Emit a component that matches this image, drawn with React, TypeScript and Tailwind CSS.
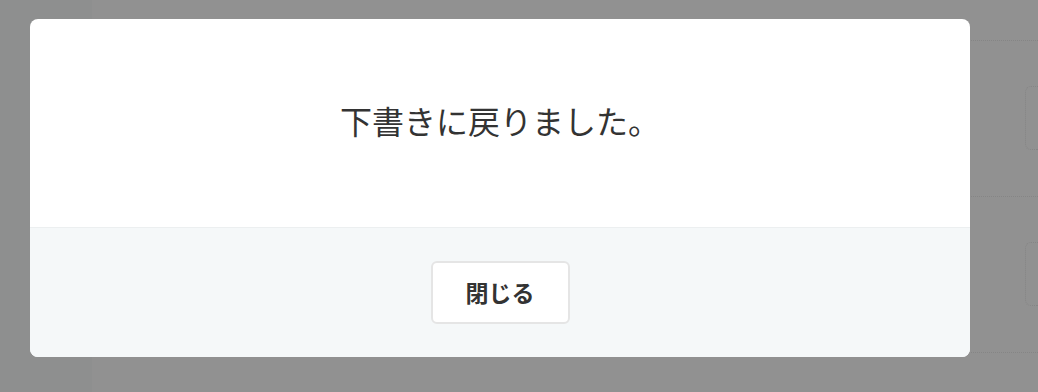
function BgRow() {
  return (
    <div className="h-[156px] shrink-0 border-b border-dotted border-[#858585] flex justify-end pt-[45px]">
      <div className="w-[13px] h-[64px] rounded-l-md border border-r-0 border-dotted border-[#858585]" />
    </div>
  );
}

export default function App() {
  return (
    <div className="relative w-[1038px] h-[392px] overflow-hidden bg-[#919191] font-['Noto_Sans_CJK_JP','Noto_Sans',sans-serif]">
      {/* dimmed page behind the modal */}
      <div className="flex h-full">
        <div className="w-[92px] h-full bg-[#8e8f8f]" />
        <div className="flex-1 flex flex-col">
          <div className="h-[41px] shrink-0 border-b border-dotted border-[#858585]" />
          <BgRow />
          <BgRow />
        </div>
      </div>
      {/* modal */}
      <div className="absolute left-[30px] top-[19px] w-[940px] h-[338px] rounded-lg overflow-hidden bg-white flex flex-col">
        <div className="h-[209px] flex items-center justify-center border-b border-[#eceff0] pb-[6px]">
          <p className="text-[32px] leading-none text-[#333333]">下書きに戻りました。</p>
        </div>
        <div className="flex-1 bg-[#f5f8f9] flex items-center justify-center">
          <button className="w-[139px] h-[63px] rounded-md bg-white border-2 border-[#e5e5e5] text-[23px] font-bold text-[#333333] flex items-center justify-center">
            閉じる
          </button>
        </div>
      </div>
    </div>
  );
}
